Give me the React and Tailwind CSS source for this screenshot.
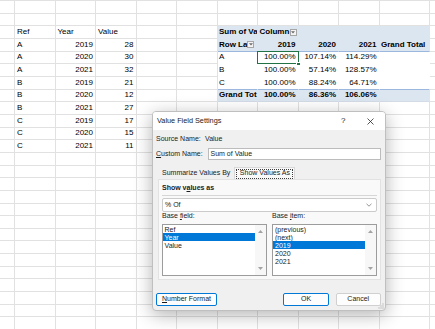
import React from 'react';

const COLS = [
  'w-[15px]', 'w-[40.5px]', 'w-[40.5px]', 'w-[40.5px]', 'w-[40.5px]', 'w-[40.5px]',
  'w-[40.5px]', 'w-[40.5px]', 'w-[40.5px]', 'w-[40.5px]', 'w-[50px]', 'w-[20px]',
];

const DATA = [
  ['A', 2019, 28], ['A', 2020, 30], ['A', 2021, 32],
  ['B', 2019, 21], ['B', 2020, 12], ['B', 2021, 27],
  ['C', 2019, 17], ['C', 2020, 15], ['C', 2021, 11],
];

const PIVOT = {
  2: { kind: 'head', bold: true, cells: ['Sum of Va', 'Column', '', '', ''] },
  3: { kind: 'labels', bold: true, cells: ['Row La', '2019', '2020', '2021', 'Grand Total'] },
  4: { kind: 'body', cells: ['A', '100.00%', '107.14%', '114.29%', ''] },
  5: { kind: 'body', cells: ['B', '100.00%', '57.14%', '128.57%', ''] },
  6: { kind: 'last', cells: ['C', '100.00%', '88.24%', '64.71%', ''] },
  7: { kind: 'total', bold: true, cells: ['Grand Tot', '100.00%', '86.36%', '106.06%', ''] },
};

const PIVOT_STYLE = {
  head: 'bg-[#dce6f1] border-r-[#dce6f1] border-b-[#dce6f1]',
  labels: 'bg-[#dce6f1] border-r-[#dce6f1] border-b-[#9bb7dd]',
  body: 'bg-white border-r-white border-b-white',
  last: 'bg-white border-r-white border-b-[#9bb7dd]',
  total: 'bg-[#dce6f1] border-r-[#dce6f1] border-b-[#d3dbe6]',
};

const FilterBtn = ({ className = '' }) => (
  <span className={`w-[7px] h-[7px] shrink-0 border border-[#a6a6a6] bg-[#f4f4f4] flex items-center justify-center ${className}`}>
    <svg width="4" height="3" viewBox="0 0 4 3"><path d="M0 0.3H4L2 2.6Z" fill="#6b6b6b" /></svg>
  </span>
);

function PivotCell({ w, row, idx }) {
  const p = PIVOT[row];
  const text = p.cells[idx];
  const right = idx >= 1 && idx <= 3 && row !== 2;
  const selected = row === 4 && idx === 1;
  return (
    <div className={`${w} ${PIVOT_STYLE[p.kind]} relative shrink-0 h-full border-r border-b flex items-center ${p.bold ? 'font-bold' : ''}`}>
      <span className={`flex-1 overflow-hidden whitespace-nowrap ${right ? 'text-right pr-[2px]' : 'pl-[1.5px]'}`}>{text}</span>
      {row === 3 && idx === 0 && <FilterBtn className="mr-[3px]" />}
      {row === 2 && idx === 1 && <FilterBtn className="mr-[1px]" />}
      {selected && (
        <>
          <span className="absolute -left-px -top-px -right-px -bottom-px border-[1.5px] border-[#217346] z-10" />
          <span className="absolute -right-[3px] -bottom-[3px] w-[4.5px] h-[4.5px] bg-[#217346] border border-white z-10" />
        </>
      )}
    </div>
  );
}

function Cell({ r, c, w }) {
  if (PIVOT[r] && c >= 6 && c <= 10) return <PivotCell w={w} row={r} idx={c - 6} />;
  let text = '';
  let right = false;
  if (r === 2 && c >= 1 && c <= 3) text = ['Ref', 'Year', 'Value'][c - 1];
  if (r >= 3 && r <= 11 && c >= 1 && c <= 3) {
    text = DATA[r - 3][c - 1];
    right = c > 1;
  }
  return (
    <div className={`${w} shrink-0 h-full border-r border-b border-[#e1e1e1] flex items-center px-[2px] whitespace-nowrap ${right ? 'justify-end' : ''}`}>
      {text}
    </div>
  );
}

const ListBox = ({ items, selected, pad = 'pl-[1.5px]' }) => (
  <div className="w-[105px] h-[52px] border border-[#9c9c9c] bg-white flex">
    <div className="flex-1 flex flex-col">
      {items.map((it) => (
        <div key={it} className={`h-[8.1px] flex items-center leading-none ${pad} ${it === selected ? 'bg-[#0078d7] text-white' : ''}`}>
          {it}
        </div>
      ))}
    </div>
    <div className="w-[11px] bg-[#f7f7f7] flex flex-col justify-between items-center pt-[5px] pb-[5px]">
      <svg width="5" height="3" viewBox="0 0 5 3"><path d="M0 3H5L2.5 0Z" fill="#a3a3a3" /></svg>
      <svg width="5" height="3" viewBox="0 0 5 3"><path d="M0 0H5L2.5 3Z" fill="#a3a3a3" /></svg>
    </div>
  </div>
);

const Dialog = () => (
  <div className="absolute left-[152px] top-[111px] w-[234px] h-[200px] flex flex-col rounded-[4px] border border-[#bfbfbf] bg-[#f0f0f0] overflow-hidden shadow-[0_4px_18px_rgba(0,0,0,0.3)] text-[7px] text-[#1b1b1b] font-['Liberation_Sans',Arial,sans-serif]">
    {/* title bar */}
    <div className="h-[18px] shrink-0 bg-white flex items-center pl-[4px] pr-[11.5px]">
      <span className="text-[7.3px]">Value Field Settings</span>
      <span className="ml-auto mr-[21px] text-[8px]">?</span>
      <svg width="7" height="7" viewBox="0 0 7 7">
        <path d="M0.5 0.5L6.5 6.5M6.5 0.5L0.5 6.5" stroke="#2b2b2b" strokeWidth="0.8" />
      </svg>
    </div>

    <div className="flex-1 flex flex-col pl-[3px] pr-[4px] pt-[4px]">
      <div className="h-[10px] flex items-center">
        <span className="w-[49px]">Source Name:</span>
        <span>Value</span>
      </div>
      <div className="mt-[4px] h-[11.5px] flex items-center">
        <span className="w-[52px]"><span className="underline">C</span>ustom Name:</span>
        <div className="w-[175px] h-full bg-white border border-[#bcbcbc] flex items-center pl-[2px]">Sum of Value</div>
      </div>

      {/* tabs */}
      <div className="mt-[7px] ml-[2px] h-[12.5px] flex items-end">
        <div className="h-[11px] px-[4px] flex items-center">Summarize Values By</div>
        <div className="h-full border border-b-0 border-[#d8d8d8] bg-[#f9f9f9] px-[1px] pt-[1px] pb-[0.5px] flex">
          <span className="border border-dotted border-[#3c3c3c] px-[2.5px] flex items-center">Show Values As</span>
        </div>
      </div>

      <div className="ml-[2px] w-[223px] h-[101px] bg-[#f9f9f9] border border-[#e2e2e2] pl-[3px] pt-[4px] flex flex-col">
        <div className="h-[9px] flex items-center font-bold">Show v<span className="underline">a</span>lues as</div>
        <div className="mt-[2px] h-px w-[215px] bg-[#d6d6d6]" />
        <div className="mt-[2px] h-[14px] w-[215px] bg-white border border-[#cbcbcb] rounded-[2px] flex items-center pl-[2px] pr-[4px]">
          <span>% Of</span>
          <svg className="ml-auto" width="6" height="4" viewBox="0 0 6 4">
            <path d="M0.5 0.8L3 3.2L5.5 0.8" fill="none" stroke="#6a6a6a" strokeWidth="0.7" />
          </svg>
        </div>
        <div className="h-[8px] flex items-center">
          <span className="w-[110px]">Base <span className="underline">f</span>ield:</span>
          <span>Base <span className="underline">i</span>tem:</span>
        </div>
        <div className="mt-[4px] flex gap-[5px]">
          <ListBox items={['Ref', 'Year', 'Value']} selected="Year" />
          <ListBox items={['(previous)', '(next)', '2019', '2020', '2021']} selected="2019" pad="pl-[2px]" />
        </div>
      </div>

      {/* buttons */}
      <div className="mt-[13px] h-[13px] flex items-stretch">
        <button className="w-[61px] bg-[#fdfdfd] border border-[#0078d7] rounded-[2px] flex items-center justify-center">
          <span><span className="underline">N</span>umber Format</span>
        </button>
        <button className="ml-auto w-[46px] bg-[#fdfdfd] border border-[#0078d7] rounded-[2px] flex items-center justify-center">OK</button>
        <button className="ml-[6.5px] w-[45.5px] bg-[#fdfdfd] border border-[#d0d0d0] rounded-[2px] flex items-center justify-center">Cancel</button>
      </div>
    </div>

    <svg className="absolute right-[1px] bottom-[1px]" width="6" height="6" viewBox="0 0 6 6">
      <g fill="#9a9a9a">
        <rect x="4.5" y="0.5" width="1" height="1" />
        <rect x="2.5" y="2.5" width="1" height="1" />
        <rect x="4.5" y="2.5" width="1" height="1" />
        <rect x="0.5" y="4.5" width="1" height="1" />
        <rect x="2.5" y="4.5" width="1" height="1" />
        <rect x="4.5" y="4.5" width="1" height="1" />
      </g>
    </svg>
  </div>
);

export default function App() {
  return (
    <div className="relative w-[435px] h-[329px] overflow-hidden bg-white text-[8px] text-black font-['Liberation_Sans',Arial,sans-serif]">
      <div className="h-[0.67px] border-b border-[#e1e1e1]" />
      {Array.from({ length: 26 }, (_, r) => (
        <div key={r} className="flex h-[12.67px]">
          {COLS.map((w, c) => <Cell key={c} r={r} c={c} w={w} />)}
        </div>
      ))}
      <Dialog />
    </div>
  );
}
